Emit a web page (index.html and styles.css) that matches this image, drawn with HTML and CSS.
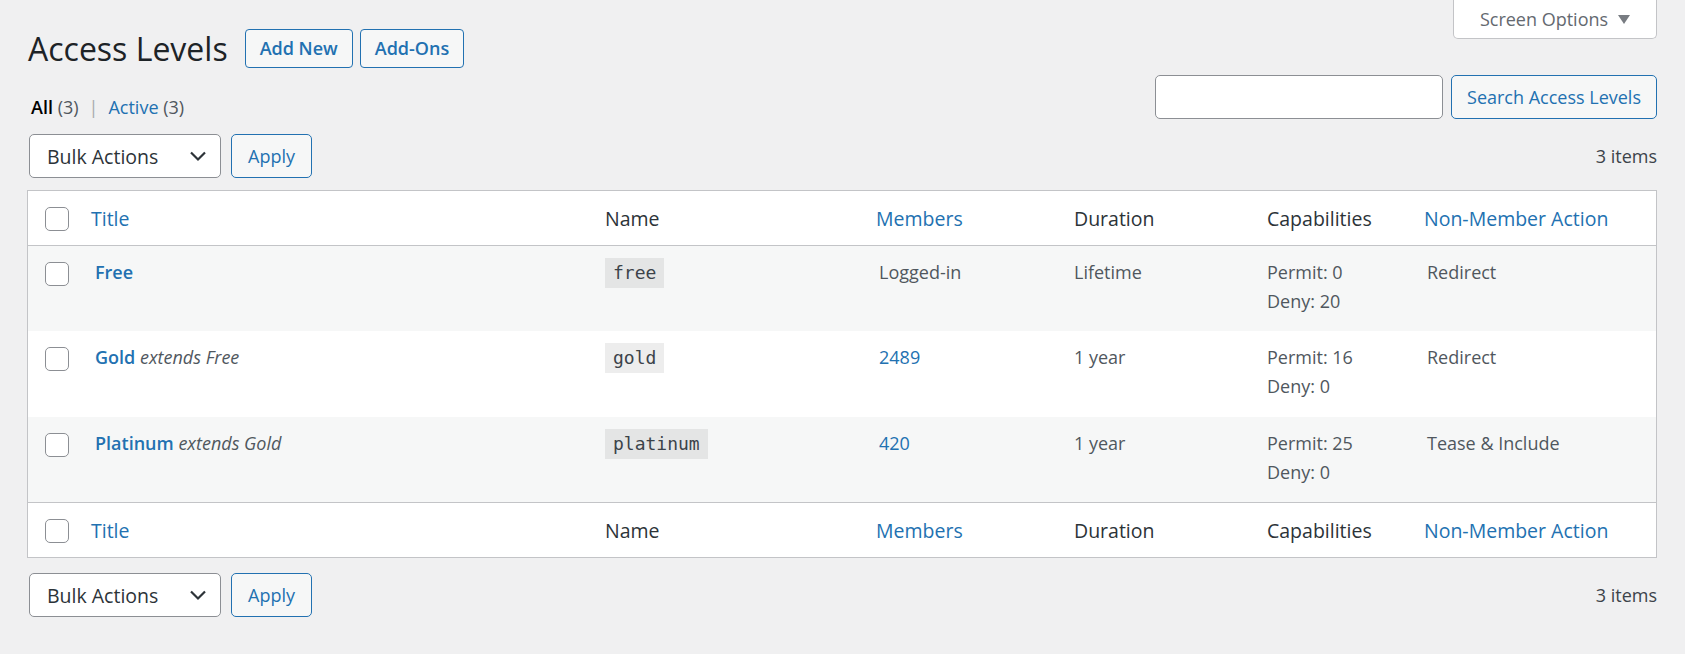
FILE: index.html
```html
<!DOCTYPE html>
<html lang="en">
<head>
<meta charset="utf-8">
<title>Access Levels</title>
<link rel="stylesheet" href="styles.css">
</head>
<body>
<div class="wrap">
  <div class="top">
    <div class="title-row">
      <h1 class="page-title">Access Levels</h1>
      <a class="page-title-action" href="#">Add New</a>
      <a class="page-title-action" href="#">Add-Ons</a>
    </div>
    <button class="screen-options" type="button">Screen Options
      <svg class="so-arrow" width="12" height="10" viewBox="0 0 12 10"><path d="M0 0H12L6 9Z" fill="#787c82"/></svg>
    </button>
  </div>

  <div class="filter-row">
    <ul class="subsubsub">
      <li><a class="current" href="#">All <span class="count">(3)</span></a><span class="sep">|</span></li>
      <li><a href="#">Active <span class="count">(3)</span></a></li>
    </ul>
    <div class="search-box">
      <input class="search-input" type="search" aria-label="Search">
      <button class="button" type="button">Search Access Levels</button>
    </div>
  </div>

  <div class="tablenav">
    <div class="actions">
      <div class="select">Bulk Actions
        <svg class="chev" width="18" height="12" viewBox="0 0 18 12"><path d="M2 2.5L9 9.5L16 2.5" fill="none" stroke="#2c3338" stroke-width="2.2"/></svg>
      </div>
      <button class="button" type="button">Apply</button>
    </div>
    <div class="num">3 items</div>
  </div>

  <table class="list">
    <colgroup>
      <col class="c-check"><col class="c-title"><col class="c-name"><col class="c-members"><col class="c-duration"><col class="c-caps"><col class="c-action">
    </colgroup>
    <thead>
      <tr>
        <th class="check"><span class="cb"></span></th>
        <th class="sortable"><a href="#">Title</a></th>
        <th>Name</th>
        <th class="sortable"><a href="#">Members</a></th>
        <th>Duration</th>
        <th>Capabilities</th>
        <th class="sortable"><a href="#">Non-Member Action</a></th>
      </tr>
    </thead>
    <tbody>
      <tr class="alt">
        <th class="check"><span class="cb"></span></th>
        <td class="title"><a class="row-title" href="#">Free</a></td>
        <td><code>free</code></td>
        <td>Logged-in</td>
        <td>Lifetime</td>
        <td>Permit: 0<br>Deny: 20</td>
        <td>Redirect</td>
      </tr>
      <tr>
        <th class="check"><span class="cb"></span></th>
        <td class="title"><a class="row-title" href="#">Gold</a> <em>extends Free</em></td>
        <td><code>gold</code></td>
        <td><a href="#">2489</a></td>
        <td>1 year</td>
        <td>Permit: 16<br>Deny: 0</td>
        <td>Redirect</td>
      </tr>
      <tr class="alt">
        <th class="check"><span class="cb"></span></th>
        <td class="title"><a class="row-title" href="#">Platinum</a> <em>extends Gold</em></td>
        <td><code>platinum</code></td>
        <td><a href="#">420</a></td>
        <td>1 year</td>
        <td>Permit: 25<br>Deny: 0</td>
        <td>Tease &amp; Include</td>
      </tr>
    </tbody>
    <tfoot>
      <tr>
        <th class="check"><span class="cb"></span></th>
        <th class="sortable"><a href="#">Title</a></th>
        <th>Name</th>
        <th class="sortable"><a href="#">Members</a></th>
        <th>Duration</th>
        <th>Capabilities</th>
        <th class="sortable"><a href="#">Non-Member Action</a></th>
      </tr>
    </tfoot>
  </table>

  <div class="tablenav bottom">
    <div class="actions">
      <div class="select">Bulk Actions
        <svg class="chev" width="18" height="12" viewBox="0 0 18 12"><path d="M2 2.5L9 9.5L16 2.5" fill="none" stroke="#2c3338" stroke-width="2.2"/></svg>
      </div>
      <button class="button" type="button">Apply</button>
    </div>
    <div class="num">3 items</div>
  </div>
</div>
</body>
</html>
```
FILE: styles.css
```css
* { box-sizing: border-box; }
html, body { margin: 0; padding: 0; }
body {
  background: #f0f0f1;
  font-family: "Open Sans", "Noto Sans", sans-serif;
  font-size: 18px;
  line-height: 29px;
  color: #3c434a;
}
a { color: #2271b1; text-decoration: none; }

.wrap { padding: 0 28px 0 27px; }

.top { display: flex; justify-content: space-between; align-items: flex-start; }
.title-row { display: flex; align-items: center; margin-top: 29px; height: 39px; padding-left: 1px; }
.page-title {
  margin: 0 17px 0 0;
  font-size: 32px;
  font-weight: 400;
  line-height: 39px;
  color: #1d2327;
}
.page-title-action {
  display: inline-flex; align-items: center; justify-content: center;
  height: 39px;
  padding: 0 14px;
  margin-right: 7px;
  border: 1px solid #2271b1;
  border-radius: 4px;
  background: #f6f7f7;
  font-weight: 600;
  font-size: 18px;
}
.screen-options {
  width: 204px; height: 40px;
  margin-top: -1px;
  background: #fff;
  border: 1px solid #c3c4c7;
  border-top: none;
  border-radius: 0 0 5px 5px;
  font: inherit;
  color: #646970;
  display: flex; align-items: center; justify-content: center; gap: 10px;
  padding: 2px 0 0 0;
}

.filter-row { display: flex; justify-content: space-between; align-items: flex-end; margin-top: 7px; height: 44px; }
.subsubsub { list-style: none; margin: 0 0 -3px 4px; padding: 0; display: flex; color: #646970; }
.subsubsub a.current { color: #000; font-weight: 600; }
.subsubsub .count { color: #50575e; font-weight: 400; }
.subsubsub .sep { color: #a7aaad; margin: 0 10px; }
.search-box { display: flex; gap: 8px; height: 44px; }
.search-input {
  width: 288px; height: 44px;
  border: 1px solid #8c8f94; border-radius: 5px; background: #fff;
}
.button {
  height: 44px;
  padding: 0 15px;
  border: 1px solid #2271b1;
  border-radius: 5px;
  background: #f6f7f7;
  color: #2271b1;
  font: inherit;
  white-space: nowrap;
}

.tablenav { display: flex; justify-content: space-between; align-items: center; height: 44px; margin-top: 15px; }
.tablenav.bottom { margin-top: 15px; }
.actions { display: flex; gap: 10px; padding-left: 2px; }
.select {
  width: 192px; height: 44px;
  border: 1px solid #8c8f94; border-radius: 5px; background: #fff;
  display: flex; align-items: center; justify-content: space-between;
  padding: 0 13px 0 17px;
  color: #2c3338;
  font-size: 19.5px;
}
.actions .button { width: 81px; padding: 0; }
.num { color: #3c434a; }

.list {
  width: 100%;
  margin-top: 12px;
  border: 1px solid #c3c4c7;
  border-spacing: 0;
  background: #fff;
  table-layout: fixed;
}
.c-check { width: 51px; }
.c-title { width: 511px; }
.c-name { width: 274px; }
.c-members { width: 195px; }
.c-duration { width: 193px; }
.c-caps { width: 160px; }
.c-action { width: 244px; }

.list th, .list td {
  text-align: left;
  vertical-align: top;
  padding: 12px 15px;
  font-weight: 400;
}
.list thead th, .list tfoot th { color: #2c3338; font-size: 19.5px; padding-top: 13px; }
.list thead th { border-bottom: 1px solid #c3c4c7; }
.list tfoot th { border-top: 1px solid #c3c4c7; }
.list th.sortable { padding-left: 12px; }
.list td { color: #50575e; }
.list tbody tr { height: 85.4px; }
.list tbody tr.alt { background: #f6f7f7; }
.list th.check { padding: 13px 0 12px 17px; }
.cb {
  display: block;
  width: 24px; height: 24px;
  margin-top: 3px;
  border: 1px solid #8c8f94;
  border-radius: 5px;
  background: #fff;
}
.row-title { font-weight: 600; }
.list td.title { padding-left: 16px; }
.list em { font-style: italic; color: #50575e; }
code {
  display: inline-block;
  vertical-align: top;
  font-family: "DejaVu Sans Mono", "Liberation Mono", monospace;
  font-size: 18px;
  line-height: 24px;
  padding: 3px 8px;
  background: rgba(0,0,0,0.07);
  color: #3c434a;
}
```
